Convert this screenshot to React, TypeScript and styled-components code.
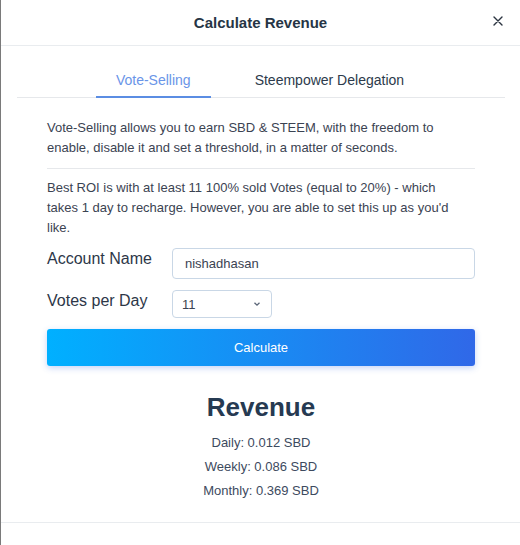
import React, {useState} from 'react';
import styled, {createGlobalStyle} from 'styled-components';

const GlobalStyle = createGlobalStyle`
  html, body {
    margin: 0;
    padding: 0;
    background: #ffffff;
  }
  body {
    font-family: "Liberation Sans", Arial, sans-serif;
  }
  * {
    box-sizing: border-box;
  }
`;

const Modal = styled.div`
  width: 520px;
  min-height: 545px;
  background: #ffffff;
  border-left: 1px solid #7a7a7a;
  display: flex;
  flex-direction: column;
`;

const Header = styled.div`
  height: 46px;
  display: flex;
  align-items: center;
  justify-content: center;
  position: relative;
  border-bottom: 1px solid #e9ecef;
`;

const Title = styled.h5`
  margin: 0;
  font-size: 15px;
  font-weight: bold;
  color: #263545;
`;

const Close = styled.button`
  position: absolute;
  right: 14px;
  top: 13px;
  width: 16px;
  height: 16px;
  padding: 0;
  border: none;
  background: none;
  display: flex;
  align-items: center;
  justify-content: center;
  cursor: pointer;
`;

const Body = styled.div`
  padding: 16px 15px 19px 16px;
`;

const Tabs = styled.div`
  display: flex;
  justify-content: center;
  gap: 24px;
  padding-right: 2px;
  border-bottom: 1px solid #e6e8eb;
`;

const Tab = styled.button<{active?: boolean}>`
  border: none;
  background: none;
  padding: 2px 20px 0;
  height: 36px;
  margin-bottom: -1px;
  font-family: inherit;
  font-size: 14px;
  color: ${props => props.active ? '#6a95e8' : '#2c3a4b'};
  border-bottom: 2px solid ${props => props.active ? '#5b8de3' : 'transparent'};
  cursor: pointer;
`;

const Content = styled.div`
  padding: 20px 30px 0;
`;

const Text = styled.p`
  margin: 0;
  padding-right: 8px;
  font-size: 13px;
  line-height: 20px;
  color: #3b4352;
`;

const Divider = styled.hr`
  margin: 10px 0 9px;
  border: none;
  border-top: 1px solid #e6e8eb;
`;

const Form = styled.div`
  margin-top: 10px;
  display: flex;
  flex-direction: column;
  gap: 11px;
`;

const Row = styled.div`
  display: flex;
  align-items: flex-start;
`;

const Label = styled.label`
  width: 125px;
  font-size: 16px;
  line-height: 22px;
  color: #2d3748;
`;

const Input = styled.input`
  flex: 1;
  height: 31px;
  border: 1px solid #c9d7e6;
  border-radius: 4px;
  padding: 0 12px;
  font-family: inherit;
  font-size: 13px;
  color: #3b4352;
  outline: none;
`;

const SelectBox = styled.div`
  width: 100px;
  height: 28px;
  border: 1px solid #c9d7e6;
  border-radius: 4px;
  padding: 0 10px 0 9px;
  display: flex;
  align-items: center;
  justify-content: space-between;
  font-size: 13px;
  color: #3b4352;
`;

const Button = styled.button`
  height: 37px;
  width: 100%;
  border: none;
  border-radius: 3px;
  background: linear-gradient(90deg, #00b0ff 0%, #3068e8 100%);
  box-shadow: 0 2px 6px rgba(60, 110, 230, 0.3);
  color: #ffffff;
  font-family: inherit;
  font-size: 13px;
  cursor: pointer;
`;

const Result = styled.div`
  margin-top: 25px;
  display: flex;
  flex-direction: column;
  align-items: center;
`;

const ResultTitle = styled.h2`
  margin: 0 0 8px;
  font-size: 26px;
  line-height: 32px;
  font-weight: bold;
  color: #263a52;
`;

const ResultLine = styled.div`
  font-size: 13px;
  line-height: 24px;
  color: #3d4a5e;
`;

const Footer = styled.div`
  border-top: 1px solid #e9ecef;
  height: 24px;
`;

export default function App()
{
    const [tab, setTab] = useState(0);
    const [account, setAccount] = useState('nishadhasan');

    return (
        <>
            <GlobalStyle/>
            <Modal>
                <Header>
                    <Title>Calculate Revenue</Title>
                    <Close aria-label="Close">
                        <svg width="10" height="10" viewBox="0 0 10 10">
                            <path d="M1 1L9 9M9 1L1 9" stroke="#2b3440" strokeWidth="1.4" strokeLinecap="round"/>
                        </svg>
                    </Close>
                </Header>
                <Body>
                    <Tabs>
                        <Tab active={tab === 0} onClick={() => setTab(0)}>Vote-Selling</Tab>
                        <Tab active={tab === 1} onClick={() => setTab(1)}>Steempower Delegation</Tab>
                    </Tabs>
                    <Content>
                        <Text>
                            Vote-Selling allows you to earn SBD &amp; STEEM, with the freedom to
                            enable, disable it and set a threshold, in a matter of seconds.
                        </Text>
                        <Divider/>
                        <Text>
                            Best ROI is with at least 11 100% sold Votes (equal to 20%) - which
                            takes 1 day to recharge. However, you are able to set this up as you'd like.
                        </Text>
                        <Form>
                            <Row>
                                <Label>Account Name</Label>
                                <Input value={account} onChange={e => setAccount(e.target.value)}/>
                            </Row>
                            <Row>
                                <Label>Votes per Day</Label>
                                <SelectBox>
                                    <span>11</span>
                                    <svg width="8" height="6" viewBox="0 0 8 6">
                                        <path d="M1.5 1.8L4 4.2L6.5 1.8" stroke="#5a6577" strokeWidth="1.3" fill="none"/>
                                    </svg>
                                </SelectBox>
                            </Row>
                            <Button>Calculate</Button>
                        </Form>
                        <Result>
                            <ResultTitle>Revenue</ResultTitle>
                            <ResultLine>Daily: 0.012 SBD</ResultLine>
                            <ResultLine>Weekly: 0.086 SBD</ResultLine>
                            <ResultLine>Monthly: 0.369 SBD</ResultLine>
                        </Result>
                    </Content>
                </Body>
                <Footer/>
            </Modal>
        </>
    );
}
